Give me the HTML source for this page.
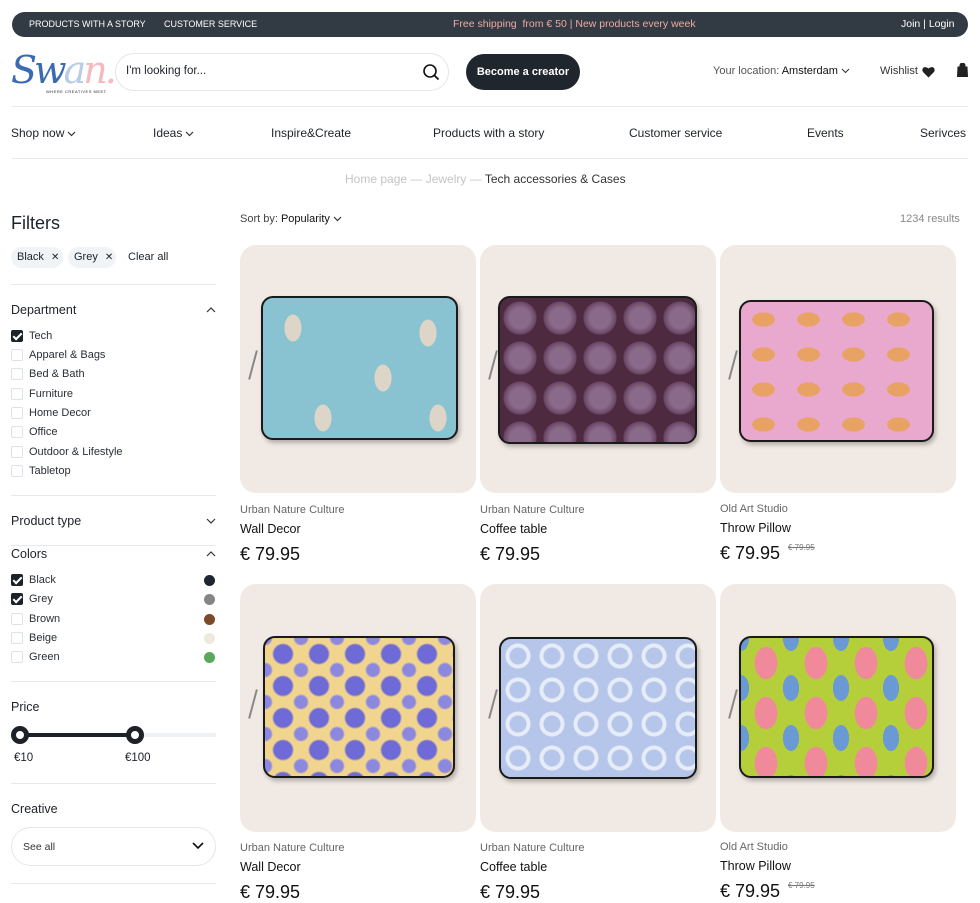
<!DOCTYPE html>
<html><head><meta charset="utf-8"><style>
*{box-sizing:border-box;margin:0;padding:0}
body{width:980px;height:903px;overflow:hidden;background:#fff;font-family:"Liberation Sans",sans-serif;color:#1d2229;position:relative}
.a{position:absolute;white-space:nowrap}
.top{left:12px;top:12px;width:956px;height:25px;background:#323a44;border-radius:13px;color:#fff;font-size:9px}
.hr{position:absolute;height:1px;background:#e6e9ee}
.nav{top:126px;font-size:12px;color:#1d2229}
.cb{position:absolute;left:11px;width:12px;height:12px;border:1px solid #dde2e8;border-radius:2px;background:#fff}
.cb.on{background:#1d2229;border-color:#1d2229}
.cb.on:after{content:"";position:absolute;left:3px;top:0px;width:3px;height:7px;border:solid #fff;border-width:0 2px 2px 0;transform:rotate(45deg)}
.lbl{left:29px;font-size:11px;color:#2a2f36}
.card{position:absolute;width:236px;height:248px;background:#f1e9e3;border-radius:16px}
.sl{position:absolute;border:2px solid #1a1a1a;border-radius:12px;box-shadow:2px 3px 4px rgba(0,0,0,.25);overflow:hidden}
.zip{position:absolute;width:2px;height:30px;background:#888;transform:rotate(15deg)}
.br{font-size:11px;color:#666}
.tt{font-size:12.5px;color:#111}
.pr{font-size:18px;color:#111}
.dot{position:absolute;left:204px;width:11px;height:11px;border-radius:50%}
.chev{display:inline-block;vertical-align:middle;margin-left:3px}
</style></head><body>
<div class="a top">
<span class="a" style="left:17px;top:7px">PRODUCTS WITH A STORY</span>
<span class="a" style="left:152px;top:7px">CUSTOMER SERVICE</span>
<span class="a" style="left:441px;top:6px;color:#f0a9a0;font-size:10.5px">Free shipping&nbsp; from € 50 | New products every week</span>
<span class="a" style="left:889px;top:6px;font-size:10.5px">Join | Login</span>
</div>
<div class="a" style="left:11px;top:48px;font-family:'DejaVu Serif','Liberation Serif',cursive;font-style:italic;font-size:38px;color:#3b6ab3;letter-spacing:-3px">Sw<span style="color:#b9cbe6">a</span><span style="color:#f5b9bf">n.</span></div>
<div class="a" style="left:46px;top:89px;font-size:4px;letter-spacing:.5px">WHERE CREATIVES MEET</div>
<div class="a" style="left:115px;top:53px;width:334px;height:38px;border:1px solid #e3e6ea;border-radius:19px"></div>
<div class="a" style="left:126px;top:65px;font-size:11.5px">I'm looking for...</div>
<svg class="a" style="left:422px;top:63px" width="18" height="18" viewBox="0 0 18 18"><circle cx="8" cy="8" r="6" fill="none" stroke="#111" stroke-width="1.6"/><path d="M12.5 12.5l4 4" stroke="#111" stroke-width="1.8"/></svg>
<div class="a" style="left:466px;top:54px;width:114px;height:36px;background:#20262d;border-radius:18px;color:#fff;font-size:11px;font-weight:bold;line-height:36px;text-align:center">Become a creator</div>
<div class="a" style="left:713px;top:65px;font-size:11px;color:#555">Your location: <span style="color:#111">Amsterdam</span><svg class="chev" width="9" height="6" viewBox="0 0 9 6"><path d="M1 1l3.5 3.5L8 1" fill="none" stroke="#333" stroke-width="1"/></svg></div>
<div class="a" style="left:880px;top:65px;font-size:11px;color:#333">Wishlist</div>
<svg class="a" style="left:922px;top:66px" width="13" height="12" viewBox="0 0 13 12"><path d="M6.5 11.5L1 6C-1 3 2-1 6.5 2.5 11-1 14 3 12 6z" fill="#222"/></svg>
<svg class="a" style="left:957px;top:63px" width="11" height="14" viewBox="0 0 11 14"><path d="M3 4V2.5a2.5 2.5 0 015 0V4M1 4h9l.5 9.5H.5z" fill="#222" stroke="#222"/></svg>
<div class="hr" style="left:12px;top:106px;width:956px"></div>
<div class="a nav" style="left:11px">Shop now<svg class="chev" width="9" height="6" viewBox="0 0 9 6"><path d="M1 1l3.5 3.5L8 1" fill="none" stroke="#333" stroke-width="1.2"/></svg></div>
<div class="a nav" style="left:153px">Ideas<svg class="chev" width="9" height="6" viewBox="0 0 9 6"><path d="M1 1l3.5 3.5L8 1" fill="none" stroke="#333" stroke-width="1.2"/></svg></div>
<div class="a nav" style="left:271px">Inspire&amp;Create</div>
<div class="a nav" style="left:433px">Products with a story</div>
<div class="a nav" style="left:629px">Customer service</div>
<div class="a nav" style="left:807px">Events</div>
<div class="a nav" style="left:920px">Serivces</div>
<div class="hr" style="left:12px;top:158px;width:956px"></div>
<div class="a" style="left:345px;top:172px;font-size:12px;color:#c4c4c4">Home page — Jewelry — <span style="color:#333">Tech accessories &amp; Cases</span></div>

<div class="a" style="left:11px;top:213px;font-size:18px">Filters</div>
<div class="a" style="left:11px;top:247px;width:52px;height:21px;background:#f1f4f7;border-radius:11px;font-size:11px;line-height:21px;padding-left:6px">Black <span style="font-size:10px;margin-left:4px">✕</span></div>
<div class="a" style="left:68px;top:247px;width:48px;height:21px;background:#f1f4f7;border-radius:11px;font-size:11px;line-height:21px;padding-left:6px">Grey <span style="font-size:10px;margin-left:4px">✕</span></div>
<div class="a" style="left:128px;top:251px;font-size:11px">Clear all</div>
<div class="hr" style="left:11px;top:284px;width:205px"></div>
<div class="a" style="left:11px;top:303px;font-size:12.5px">Department</div>
<svg class="a" style="left:206px;top:307px" width="10" height="6" viewBox="0 0 10 6"><path d="M1 5l4-4 4 4" fill="none" stroke="#333" stroke-width="1.2"/></svg>
<div class="cb on" style="top:330px"></div><div class="a lbl" style="top:330px">Tech</div>
<div class="cb" style="top:349px"></div><div class="a lbl" style="top:349px">Apparel &amp; Bags</div>
<div class="cb" style="top:368px"></div><div class="a lbl" style="top:368px">Bed &amp; Bath</div>
<div class="cb" style="top:388px"></div><div class="a lbl" style="top:388px">Furniture</div>
<div class="cb" style="top:407px"></div><div class="a lbl" style="top:407px">Home Decor</div>
<div class="cb" style="top:426px"></div><div class="a lbl" style="top:426px">Office</div>
<div class="cb" style="top:446px"></div><div class="a lbl" style="top:446px">Outdoor &amp; Lifestyle</div>
<div class="cb" style="top:465px"></div><div class="a lbl" style="top:465px">Tabletop</div>
<div class="hr" style="left:11px;top:495px;width:205px"></div>
<div class="a" style="left:11px;top:514px;font-size:12.5px">Product type</div>
<svg class="a" style="left:206px;top:518px" width="10" height="6" viewBox="0 0 10 6"><path d="M1 1l4 4 4-4" fill="none" stroke="#333" stroke-width="1.2"/></svg>
<div class="hr" style="left:11px;top:545px;width:205px"></div>
<div class="a" style="left:11px;top:547px;font-size:12.5px">Colors</div>
<svg class="a" style="left:206px;top:551px" width="10" height="6" viewBox="0 0 10 6"><path d="M1 5l4-4 4 4" fill="none" stroke="#333" stroke-width="1.2"/></svg>
<div class="cb on" style="top:574px"></div><div class="a lbl" style="top:574px">Black</div><div class="dot" style="top:575px;background:#1f2630"></div>
<div class="cb on" style="top:593px"></div><div class="a lbl" style="top:593px">Grey</div><div class="dot" style="top:594px;background:#858585"></div>
<div class="cb" style="top:613px"></div><div class="a lbl" style="top:613px">Brown</div><div class="dot" style="top:614px;background:#7b4a2b"></div>
<div class="cb" style="top:632px"></div><div class="a lbl" style="top:632px">Beige</div><div class="dot" style="top:633px;background:#efe8dc"></div>
<div class="cb" style="top:651px"></div><div class="a lbl" style="top:651px">Green</div><div class="dot" style="top:652px;background:#5aa85a"></div>
<div class="hr" style="left:11px;top:681px;width:205px"></div>
<div class="a" style="left:11px;top:700px;font-size:12.5px">Price</div>
<div class="a" style="left:20px;top:733px;width:196px;height:4px;background:#eef1f4"></div>
<div class="a" style="left:20px;top:733px;width:116px;height:4px;background:#1d2229"></div>
<div class="a" style="left:11px;top:726px;width:18px;height:18px;border-radius:50%;background:#fff;border:5px solid #1d2229"></div>
<div class="a" style="left:126px;top:726px;width:18px;height:18px;border-radius:50%;background:#fff;border:5px solid #1d2229"></div>
<div class="a" style="left:14px;top:752px;font-size:11.5px">€10</div>
<div class="a" style="left:125px;top:752px;font-size:11.5px">€100</div>
<div class="hr" style="left:11px;top:783px;width:205px"></div>
<div class="a" style="left:11px;top:802px;font-size:12.5px">Creative</div>
<div class="a" style="left:11px;top:827px;width:205px;height:39px;border:1px solid #e3e6ea;border-radius:20px"></div>
<div class="a" style="left:23px;top:841px;font-size:10.5px;color:#333">See all</div>
<svg class="a" style="left:192px;top:842px" width="12" height="8" viewBox="0 0 12 8"><path d="M1 1l5 5 5-5" fill="none" stroke="#111" stroke-width="1.6"/></svg>
<div class="hr" style="left:11px;top:883px;width:205px"></div>

<div class="a" style="left:240px;top:213px;font-size:11px;color:#444">Sort by: <span style="color:#111">Popularity</span><svg class="chev" width="9" height="6" viewBox="0 0 9 6"><path d="M1 1l3.5 3.5L8 1" fill="none" stroke="#333" stroke-width="1.2"/></svg></div>
<div class="a" style="left:900px;top:213px;font-size:11px;color:#888">1234 results</div>

<div class="card" style="left:240px;top:245px"><div class="sl" style="left:21px;top:51px;width:197px;height:144px;background:radial-gradient(ellipse 14px 22px at 30px 30px,#ddd6c8 60%,transparent 62%),radial-gradient(ellipse 14px 22px at 165px 35px,#ddd6c8 60%,transparent 62%),radial-gradient(ellipse 14px 22px at 120px 80px,#ddd6c8 60%,transparent 62%),radial-gradient(ellipse 14px 22px at 60px 120px,#ddd6c8 60%,transparent 62%),radial-gradient(ellipse 14px 22px at 175px 120px,#ddd6c8 60%,transparent 62%),#89c3d1"></div><div class="zip" style="left:12px;top:105px"></div></div>
<div class="card" style="left:480px;top:245px"><div class="sl" style="left:18px;top:51px;width:199px;height:148px;background:radial-gradient(circle at 50% 50%,#8a6a8a 10px,#6b4766 16px,transparent 17px) 0 0/40px 40px,#4d2a40"></div><div class="zip" style="left:12px;top:105px"></div></div>
<div class="card" style="left:720px;top:245px"><div class="sl" style="left:19px;top:55px;width:195px;height:142px;background:radial-gradient(ellipse 16px 10px at 50% 50%,#e8a264 70%,transparent 72%) 0 0/45px 35px,#e9a8cd"></div><div class="zip" style="left:12px;top:105px"></div></div>
<div class="card" style="left:240px;top:584px"><div class="sl" style="left:23px;top:52px;width:192px;height:142px;background:radial-gradient(circle,#6e6ad6 9px,transparent 11px) 0 0/36px 32px,radial-gradient(circle,#8c88e0 6px,transparent 8px) 18px 16px/36px 32px,#f1d48e"></div><div class="zip" style="left:12px;top:105px"></div></div>
<div class="card" style="left:480px;top:584px"><div class="sl" style="left:19px;top:53px;width:198px;height:142px;background:radial-gradient(circle,transparent 8px,#e6edf8 9px,#e6edf8 12px,transparent 13px) 0 0/34px 34px,#b5c6ea"></div><div class="zip" style="left:12px;top:105px"></div></div>
<div class="card" style="left:720px;top:584px"><div class="sl" style="left:19px;top:52px;width:195px;height:142px;background:radial-gradient(ellipse 14px 20px,#f08a9a 80%,transparent 82%) 0 0/50px 50px,radial-gradient(ellipse 10px 16px,#6a9ad6 80%,transparent 82%) 25px 25px/50px 50px,#b5cf3a"></div><div class="zip" style="left:12px;top:105px"></div></div>

<div class="a br" style="left:240px;top:504px">Urban Nature Culture</div><div class="a tt" style="left:240px;top:522px">Wall Decor</div><div class="a pr" style="left:240px;top:544px">€ 79.95</div>
<div class="a br" style="left:480px;top:504px">Urban Nature Culture</div><div class="a tt" style="left:480px;top:522px">Coffee table</div><div class="a pr" style="left:480px;top:544px">€ 79.95</div>
<div class="a br" style="left:720px;top:503px">Old Art Studio</div><div class="a tt" style="left:720px;top:521px">Throw Pillow</div><div class="a pr" style="left:720px;top:543px">€ 79.95</div><div class="a" style="left:788px;top:543px;font-size:8px;color:#777;text-decoration:line-through">€ 79.95</div>
<div class="a br" style="left:240px;top:842px">Urban Nature Culture</div><div class="a tt" style="left:240px;top:860px">Wall Decor</div><div class="a pr" style="left:240px;top:882px">€ 79.95</div>
<div class="a br" style="left:480px;top:842px">Urban Nature Culture</div><div class="a tt" style="left:480px;top:860px">Coffee table</div><div class="a pr" style="left:480px;top:882px">€ 79.95</div>
<div class="a br" style="left:720px;top:841px">Old Art Studio</div><div class="a tt" style="left:720px;top:859px">Throw Pillow</div><div class="a pr" style="left:720px;top:881px">€ 79.95</div><div class="a" style="left:788px;top:881px;font-size:8px;color:#777;text-decoration:line-through">€ 79.95</div>
</body></html>
